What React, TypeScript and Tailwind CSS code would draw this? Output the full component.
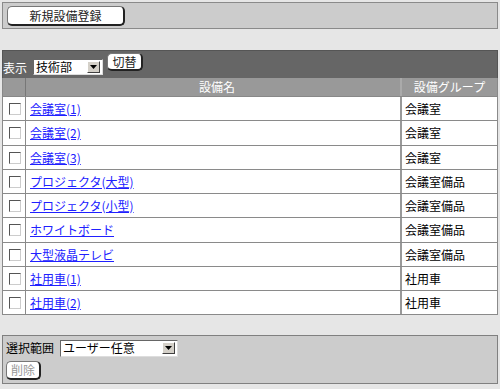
import React from "react"

const font = { fontFamily: '"Noto Sans CJK JP", "Liberation Sans", sans-serif' }

const rows = [
  { name: "会議室(1)", group: "会議室" },
  { name: "会議室(2)", group: "会議室" },
  { name: "会議室(3)", group: "会議室" },
  { name: "プロジェクタ(大型)", group: "会議室備品" },
  { name: "プロジェクタ(小型)", group: "会議室備品" },
  { name: "ホワイトボード", group: "会議室備品" },
  { name: "大型液晶テレビ", group: "会議室備品" },
  { name: "社用車(1)", group: "社用車" },
  { name: "社用車(2)", group: "社用車" },
]

function Btn({ children, className = "", muted = false }: { children: React.ReactNode; className?: string; muted?: boolean }) {
  return (
    <button
      className={
        "flex items-center justify-center bg-white rounded-[5px] border border-[#777] border-r-2 border-b-2 border-r-[#222] border-b-[#222] text-[12px] leading-none " +
        (muted ? "text-[#999] " : "text-[#222] ") +
        className
      }
    >
      {children}
    </button>
  )
}

function Select({ value, className = "" }: { value: string; className?: string }) {
  return (
    <div className={"flex items-center bg-white border border-t-[#666] border-l-[#666] border-r-[#ddd] border-b-[#ddd] pl-[2px] pr-[2px] text-[12px] leading-none text-black " + className}>
      <span className="flex-1">{value}</span>
      <span className="flex h-[12px] w-[13px] items-center justify-center bg-[#d4d0c8] border border-t-white border-l-white border-r-[#404040] border-b-[#404040]">
        <svg width="7" height="4" viewBox="0 0 7 4">
          <path d="M0 0h7L3.5 4z" fill="#000" />
        </svg>
      </span>
    </div>
  )
}

function Checkbox() {
  return (
    <span className="block h-[12px] w-[12px] bg-white border border-t-[#555] border-l-[#555] border-r-[#ccc] border-b-[#ccc]" />
  )
}

export default function App() {
  return (
    <div className="w-[500px] h-[389px] bg-[#e6e6e6] pt-[2px] px-[2px] overflow-hidden" style={font}>
      <div className="h-[27px] bg-[#cccccc] border border-[#8a8a8a] px-[4px] pt-[3px]">
        <Btn className="h-[20px] w-[118px]">新規設備登録</Btn>
      </div>

      <div className="mt-[21px] bg-white">
        <div className="h-[28px] bg-[#666666] border-t border-x border-[#555] flex items-end pb-[3px]">
          <span className="text-[12px] leading-none text-white mb-[1px]">表示</span>
          <Select value="技術部" className="ml-[6px] h-[16px] w-[70px]" />
          <Btn className="ml-[4px] mb-[4px] h-[18px] w-[36px]">切替</Btn>
        </div>
        <div className="flex h-[19px] bg-[#999999] text-white text-[12px] leading-none border-x border-b border-[#888]">
          <div className="w-[23px] border-r border-[#777]" />
          <div className="flex-1 flex items-center justify-center border-r-2 border-[#aaa] pl-[8px]">設備名</div>
          <div className="w-[95px] flex items-center justify-center">設備グループ</div>
        </div>
        {rows.map((r, i) => (
          <div
            key={r.name}
            className={
              "flex border-x border-b border-[#8a8a8a] text-[12px] leading-none " +
              (i % 4 === 1 ? "h-[25px]" : "h-[24px]")
            }
          >
            <div className="w-[23px] border-r border-[#8a8a8a] flex items-center justify-center pl-[2px]">
              <Checkbox />
            </div>
            <div className="flex-1 flex items-center pl-[4px] border-r-2 border-[#999]">
              <a href="#" className="text-[#2020ff] underline">{r.name}</a>
            </div>
            <div className="w-[95px] flex items-center pl-[3px] text-black">{r.group}</div>
          </div>
        ))}
      </div>

      <div className="mt-[20px] h-[49px] bg-[#cccccc] border border-[#808080] px-[3px] pt-[3px]">
        <div className="flex items-center h-[18px]">
          <span className="text-[12px] leading-none text-black">選択範囲</span>
          <Select value="ユーザー任意" className="ml-[6px] h-[17px] w-[118px]" />
        </div>
        <Btn muted className="mt-[4px] h-[19px] w-[35px]">削除</Btn>
      </div>
    </div>
  )
}
